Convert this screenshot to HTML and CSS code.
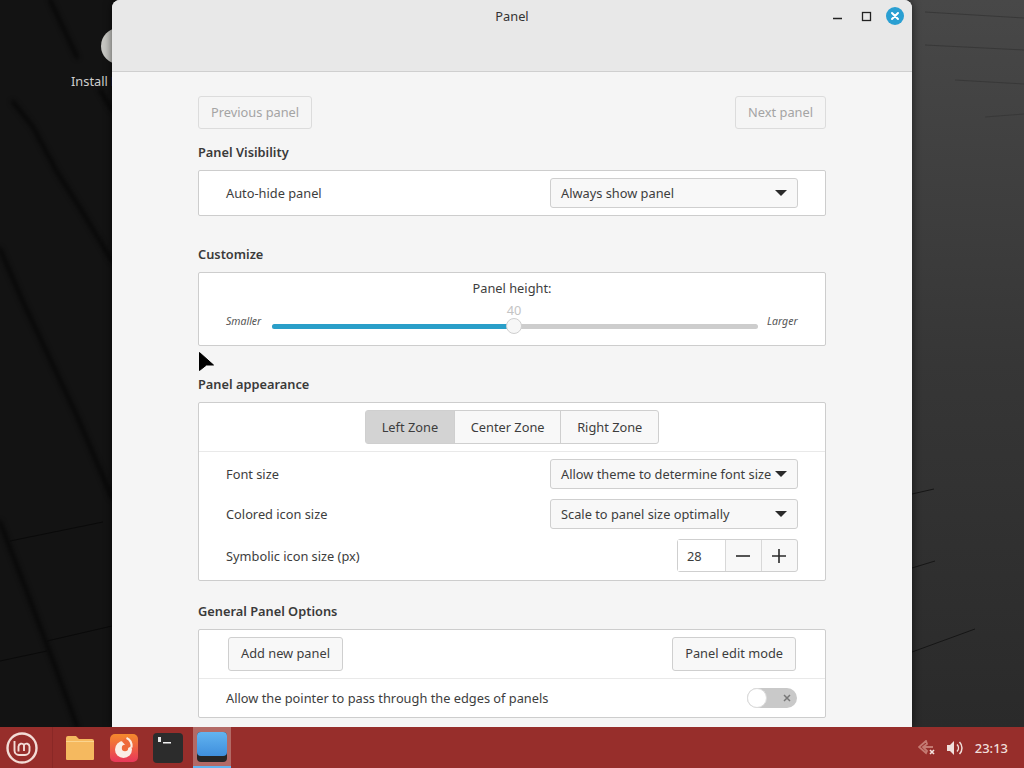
FILE: index.html
```html
<!DOCTYPE html>
<html lang="en">
<head>
    <meta charset="UTF-8">
    <title>Panel</title>
    <link rel="stylesheet" href="styles.css">
</head>
<body>
    <div class="desktop">
        <svg class="wallpaper" width="1024" height="727" viewBox="0 0 1024 727">
            <defs>
                <linearGradient id="wall" x1="0" y1="0" x2="0" y2="1">
                    <stop offset="0" stop-color="#484848"/>
                    <stop offset="0.5" stop-color="#363636"/>
                    <stop offset="1" stop-color="#2a2a2a"/>
                </linearGradient>
            </defs>
            <rect width="500" height="727" fill="#131313"/>
            <rect x="500" width="524" height="727" fill="url(#wall)"/>
            <g class="crease" fill="none" stroke="#070707" stroke-width="4" stroke-linecap="round">
                <path d="M50 0L77 57"/>
                <path d="M100 90L112 110"/>
                <path d="M13 102L33 127 57 172 80 208 112 261"/>
                <path d="M0 249L23 302 50 359 77 416 112 498"/>
                <path d="M0 522L27 592 53 661 77 726"/>
            </g>
            <g class="crease-thin" fill="none" stroke="#0a0a0a" stroke-width="1">
                <path d="M10 541L103 522"/>
                <path d="M0 661L47 651"/>
                <path d="M47 641L112 626"/>
            </g>
            <g class="crease-thin" fill="none" stroke="#161616" stroke-width="1">
                <path d="M912 494L934 489"/>
                <path d="M912 568L935 561"/>
                <path d="M912 652L975 629"/>
            </g>
            <g class="crease-thin" fill="none" stroke="#383838" stroke-width="1">
                <path d="M925 12L1024 18"/>
                <path d="M925 45L1024 50"/>
                <path d="M955 80L1024 84"/>
                <path d="M985 117L1024 114"/>
            </g>
        </svg>

        <div class="desktop-icon">
            <div class="desktop-icon-disc"></div>
            <div class="desktop-icon-label">Install Linux Mint</div>
        </div>

        <div class="window">
            <header class="titlebar">
                <span class="title">Panel</span>
                <div class="window-controls">
                    <svg class="ctl" width="16" height="16" viewBox="0 0 16 16"><path d="M3 10.500h9" stroke="#222" stroke-width="1.400"/></svg>
                    <svg class="ctl" width="16" height="16" viewBox="0 0 16 16"><rect x="4.500" y="4.500" width="8" height="8" fill="none" stroke="#222" stroke-width="1.300"/></svg>
                    <svg class="ctl" width="18" height="18" viewBox="0 0 18 18"><circle cx="9" cy="9" r="9" fill="#2a9fd2"/><path d="M6 6l6 6M12 6l-6 6" stroke="#fff" stroke-width="2" stroke-linecap="round"/></svg>
                </div>
            </header>

            <div class="content">
                <div class="nav-row">
                    <button class="btn disabled">Previous panel</button>
                    <button class="btn disabled">Next panel</button>
                </div>

                <section class="section">
                    <h2>Panel Visibility</h2>
                    <div class="frame">
                        <div class="row row-single">
                            <span>Auto-hide panel</span>
                            <div class="combo"><span>Always show panel</span><i class="caret"></i></div>
                        </div>
                    </div>
                </section>

                <section class="section">
                    <h2>Customize</h2>
                    <div class="frame frame-slider">
                        <div class="slider-label">Panel height:</div>
                        <div class="slider-row">
                            <em class="smaller">Smaller</em>
                            <div class="slider">
                                <span class="slider-value">40</span>
                                <div class="slider-fill"></div>
                                <div class="slider-thumb"></div>
                            </div>
                            <em class="larger">Larger</em>
                        </div>
                    </div>
                </section>

                <section class="section section-tight">
                    <h2>Panel appearance</h2>
                    <div class="frame">
                        <div class="zones">
                            <div class="segmented">
                                <span class="seg active">Left Zone</span>
                                <span class="seg">Center Zone</span>
                                <span class="seg">Right Zone</span>
                            </div>
                        </div>
                        <div class="rows">
                            <div class="row">
                                <span>Font size</span>
                                <div class="combo"><span>Allow theme to determine font size</span><i class="caret"></i></div>
                            </div>
                            <div class="row">
                                <span>Colored icon size</span>
                                <div class="combo"><span>Scale to panel size optimally</span><i class="caret"></i></div>
                            </div>
                            <div class="row row-spin">
                                <span>Symbolic icon size (px)</span>
                                <div class="spin">
                                    <span class="spin-value">28</span>
                                    <span class="spin-btn"><svg width="14" height="14" viewBox="0 0 14 14"><path d="M0 7h14" stroke="#2a2a2a" stroke-width="1.600"/></svg></span>
                                    <span class="spin-btn"><svg width="14" height="14" viewBox="0 0 14 14"><path d="M0 7h14M7 0v14" stroke="#2a2a2a" stroke-width="1.600"/></svg></span>
                                </div>
                            </div>
                        </div>
                    </div>
                </section>

                <section class="section">
                    <h2>General Panel Options</h2>
                    <div class="frame">
                        <div class="row row-buttons">
                            <button class="btn">Add new panel</button>
                            <button class="btn">Panel edit mode</button>
                        </div>
                        <div class="row row-switch">
                            <span>Allow the pointer to pass through the edges of panels</span>
                            <div class="switch">
                                <div class="switch-knob"></div>
                                <svg width="8" height="8" viewBox="0 0 8 8"><path d="M1 1l6 6M7 1l-6 6" stroke="#777" stroke-width="1.500"/></svg>
                            </div>
                        </div>
                    </div>
                </section>
            </div>
        </div>

        <svg class="cursor" width="18" height="22" viewBox="0 0 18 22"><path d="M1.500 1.500L15.500 14H8.500L1.500 19.500z" fill="#000" stroke="#000" stroke-width="1"/></svg>
    </div>

    <footer class="panel">
        <div class="menu-btn">
            <svg width="32" height="32" viewBox="0 0 32 32">
                <circle cx="16" cy="16" r="14.500" fill="none" stroke="#f3dcd6" stroke-width="2.400"/>
                <path d="M8.500 9v9.500a4.500 4.500 0 0 0 4.500 4.500h6a4.500 4.500 0 0 0 4.500-4.500v-4a3 3 0 0 0-5.500-1.500 3 3 0 0 0-5.500 1.500v5M18 13v6" fill="none" stroke="#f3dcd6" stroke-width="1.900"/>
            </svg>
        </div>
        <div class="launchers">
            <div class="launcher">
                <svg width="30" height="26" viewBox="0 0 30 26"><path d="M1 3a2 2 0 0 1 2-2h8l3 3h13a2 2 0 0 1 2 2v18a1 1 0 0 1-1 1H2a1 1 0 0 1-1-1z" fill="#f5b95f"/><path d="M1 6h28v1H1z" fill="#fbd48e"/></svg>
            </div>
            <div class="launcher">
                <svg width="28" height="28" viewBox="0 0 28 28">
                    <defs><linearGradient id="fx" x1="0" y1="0" x2="0" y2="1"><stop offset="0" stop-color="#f58a2c"/><stop offset="1" stop-color="#e8375a"/></linearGradient></defs>
                    <rect width="28" height="28" rx="5" fill="url(#fx)"/>
                    <circle cx="13.500" cy="15.500" r="8.500" fill="#fbeee6"/>
                    <circle cx="15" cy="14" r="3.200" fill="#ee6a3a"/>
                    <path d="M12 7.500c1-2 3-3 4.500-3.500 3 1.500 5 4 5.500 8l-4 2z" fill="#ee6a3a"/>
                    <path d="M16.500 4c3.500 1.500 5.500 5 5 9.500" fill="none" stroke="#fbeee6" stroke-width="2.200"/>
                </svg>
            </div>
            <div class="launcher">
                <svg width="30" height="30" viewBox="0 0 30 30"><rect width="30" height="30" rx="4" fill="#2c2c2c"/><path d="M5 4h3v5H5z" fill="#e8e8e8"/><path d="M10 9h8v1.500h-8z" fill="#f2f2f2"/></svg>
            </div>
            <div class="launcher launcher-active">
                <svg width="30" height="30" viewBox="0 0 30 30">
                    <defs><linearGradient id="win" x1="0" y1="0" x2="0" y2="1"><stop offset="0" stop-color="#62b4f0"/><stop offset="1" stop-color="#3f8fdd"/></linearGradient></defs>
                    <rect width="30" height="30" rx="4" fill="#262626"/>
                    <rect width="30" height="24" rx="4" fill="url(#win)"/>
                </svg>
            </div>
        </div>
        <div class="tray">
            <svg width="18" height="16" viewBox="0 0 18 16"><path d="M8 1l-7 6 7 6 1-2-4-4 4-3zM6 7h9" fill="none" stroke="#c47a72" stroke-width="1.800"/><path d="M12 10l4 4M16 10l-4 4" stroke="#f3e3df" stroke-width="1.600"/></svg>
            <svg width="18" height="16" viewBox="0 0 18 16"><path d="M1 5h3l4-4v14l-4-4H1z" fill="#f0dfdb"/><path d="M11 4.500a5 5 0 0 1 0 7M13.500 2a8.500 8.500 0 0 1 0 12" fill="none" stroke="#f0dfdb" stroke-width="1.500"/></svg>
            <span class="clock">23:13</span>
        </div>
    </footer>
</body>
</html>
```
FILE: styles.css
```css
* {
    box-sizing: border-box;
}
html, body {
    height: 100%;
}
body {
    margin: 0;
    display: flex;
    flex-direction: column;
    overflow: hidden;
    font-family: "Noto Sans", "Open Sans", sans-serif;
    font-size: 12.800px;
    color: #3d3d3d;
}
.desktop {
    position: relative;
    flex: 1;
    overflow: hidden;
    background: #131313;
}
.wallpaper {
    position: absolute;
    left: 0;
    top: 0;
}
.crease {
    filter: blur(2px);
}
.crease-thin {
    filter: blur(0.5px);
}
.desktop-icon {
    position: absolute;
    left: 71px;
    top: 28px;
    width: 100px;
}
.desktop-icon-disc {
    width: 36px;
    height: 36px;
    margin-left: 30px;
    border-radius: 50%;
    background: #c6c6c2;
}
.desktop-icon-label {
    margin-top: 8px;
    color: #cfcfcf;
    white-space: nowrap;
}
.window {
    position: absolute;
    left: 112px;
    top: 0;
    width: 800px;
    height: 727px;
    border-radius: 8px 8px 0 0;
    background: #f5f5f5;
    box-shadow: 0 0 8px rgba(0,0,0,0.6);
    overflow: hidden;
}
.titlebar {
    position: relative;
    height: 72px;
    background: #e8e8e8;
    border-bottom: 1px solid #cfcfcf;
    text-align: center;
}
.title {
    display: block;
    padding-top: 7px;
    color: #333;
}
.window-controls {
    position: absolute;
    top: 7px;
    right: 8px;
    display: flex;
    align-items: center;
    gap: 12px;
}
.content {
    padding: 24px 86px 0;
}
.nav-row {
    display: flex;
    justify-content: space-between;
    margin-bottom: 14px;
}
.btn {
    height: 33px;
    padding: 0 12px 2px;
    border: 1px solid #cfcfcf;
    border-radius: 3px;
    background: #f8f8f8;
    font: inherit;
    color: #3d3d3d;
}
.btn.disabled {
    color: #a4a4a4;
    background: #f5f5f5;
    border-color: #dcdcdc;
}
.section {
    margin-bottom: 29px;
}
.section-tight {
    margin-bottom: 21px;
}
h2 {
    margin: 0 0 9px;
    font-size: 12.800px;
    line-height: 18px;
    font-weight: 600;
    color: #3a3a3a;
}
.frame {
    border: 1px solid #cdcdcd;
    border-radius: 2px;
    background: #fff;
}
.row {
    display: flex;
    align-items: center;
    justify-content: space-between;
    height: 40px;
    padding: 0 27px;
}
.row-single {
    height: 44px;
}
.combo {
    display: flex;
    align-items: center;
    justify-content: space-between;
    flex-shrink: 0;
    width: 248px;
    height: 30px;
    padding: 0 10px 0 10px;
    border: 1px solid #cfcfcf;
    border-radius: 3px;
    background: #f8f8f8;
    white-space: nowrap;
}
.caret {
    width: 0;
    height: 0;
    border-left: 6px solid transparent;
    border-right: 6px solid transparent;
    border-top: 6px solid #2a2a2a;
}
.frame-slider {
    height: 74px;
    padding-top: 6px;
}
.slider-label {
    text-align: center;
    line-height: 18px;
}
.slider-row {
    display: flex;
    align-items: center;
    gap: 9px;
    padding: 0 27px;
    margin-top: 18px;
    height: 22px;
}
.slider-row em {
    font-size: 10.500px;
    color: #555;
    position: relative;
    top: -5px;
}
.smaller {
    width: 37px;
}
.larger {
    width: 31px;
}
.slider {
    position: relative;
    flex: 1;
    height: 5px;
    border-radius: 3px;
    background: #cdcdcd;
}
.slider-fill {
    width: 242px;
    height: 5px;
    border-radius: 3px 0 0 3px;
    background: #2a9fc9;
}
.slider-thumb {
    position: absolute;
    left: 234px;
    top: -6px;
    width: 16px;
    height: 16px;
    border: 1px solid #cfcfcf;
    border-radius: 50%;
    background: #f7f7f7;
}
.slider-value {
    position: absolute;
    left: 234px;
    top: -22px;
    width: 16px;
    text-align: center;
    color: #c4c4c4;
    line-height: 16px;
}
.zones {
    display: flex;
    justify-content: center;
    height: 49px;
    padding-top: 7px;
    border-bottom: 1px solid #e9e9e9;
}
.segmented {
    display: flex;
    height: 34px;
    border: 1px solid #cfcfcf;
    border-radius: 3px;
    background: #f8f8f8;
}
.seg {
    display: flex;
    align-items: center;
    padding: 0 15.800px;
    border-left: 1px solid #cfcfcf;
}
.seg:first-child {
    border-left: none;
}
.seg.active {
    background: #d3d3d3;
}
.rows {
    padding: 2px 0 3px;
}
.row-spin {
    height: 43px;
}
.spin {
    display: flex;
    height: 33px;
    border: 1px solid #cfcfcf;
    border-radius: 3px;
    background: #f8f8f8;
}
.spin-value {
    display: flex;
    align-items: center;
    width: 47px;
    padding-left: 9px;
    background: #fff;
}
.spin-btn {
    display: flex;
    align-items: center;
    justify-content: center;
    width: 36px;
    padding-right: 2px;
    border-left: 1px solid #d8d8d8;
}
.row-buttons {
    height: 49px;
    padding: 0 29px;
    border-bottom: 1px solid #e9e9e9;
}
.row-buttons .btn {
    height: 34px;
}
.row-switch {
    height: 38px;
}
.switch {
    display: flex;
    align-items: center;
    justify-content: flex-end;
    width: 50px;
    height: 20px;
    margin-right: 1px;
    padding-right: 6px;
    border-radius: 10px;
    background: #c9c9c9;
    position: relative;
}
.switch-knob {
    position: absolute;
    left: 0;
    top: 0;
    width: 20px;
    height: 20px;
    border: 1px solid #dcdcdc;
    border-radius: 50%;
    background: #fff;
}
.cursor {
    position: absolute;
    left: 198px;
    top: 351px;
}
.panel {
    display: flex;
    align-items: center;
    height: 41px;
    flex-shrink: 0;
    background: #972e2b;
    color: #f0dfdb;
}
.menu-btn {
    display: flex;
    align-items: center;
    justify-content: center;
    width: 53px;
    height: 100%;
    padding-right: 9px;
    border-right: 1px solid #8a2826;
}
.launchers {
    display: flex;
    align-items: center;
    height: 100%;
    padding-left: 5px;
}
.launcher {
    display: flex;
    align-items: center;
    justify-content: center;
    width: 44px;
    height: 100%;
}
.launcher-active {
    width: 38px;
    margin-left: 3px;
    background: #b36a66;
    border-bottom: 2px solid #62b4f0;
}
.tray {
    display: flex;
    align-items: center;
    gap: 10px;
    margin-left: auto;
    padding-right: 16px;
}
.clock {
    font-size: 13px;
    font-weight: 500;
    margin-left: 1px;
}
```
